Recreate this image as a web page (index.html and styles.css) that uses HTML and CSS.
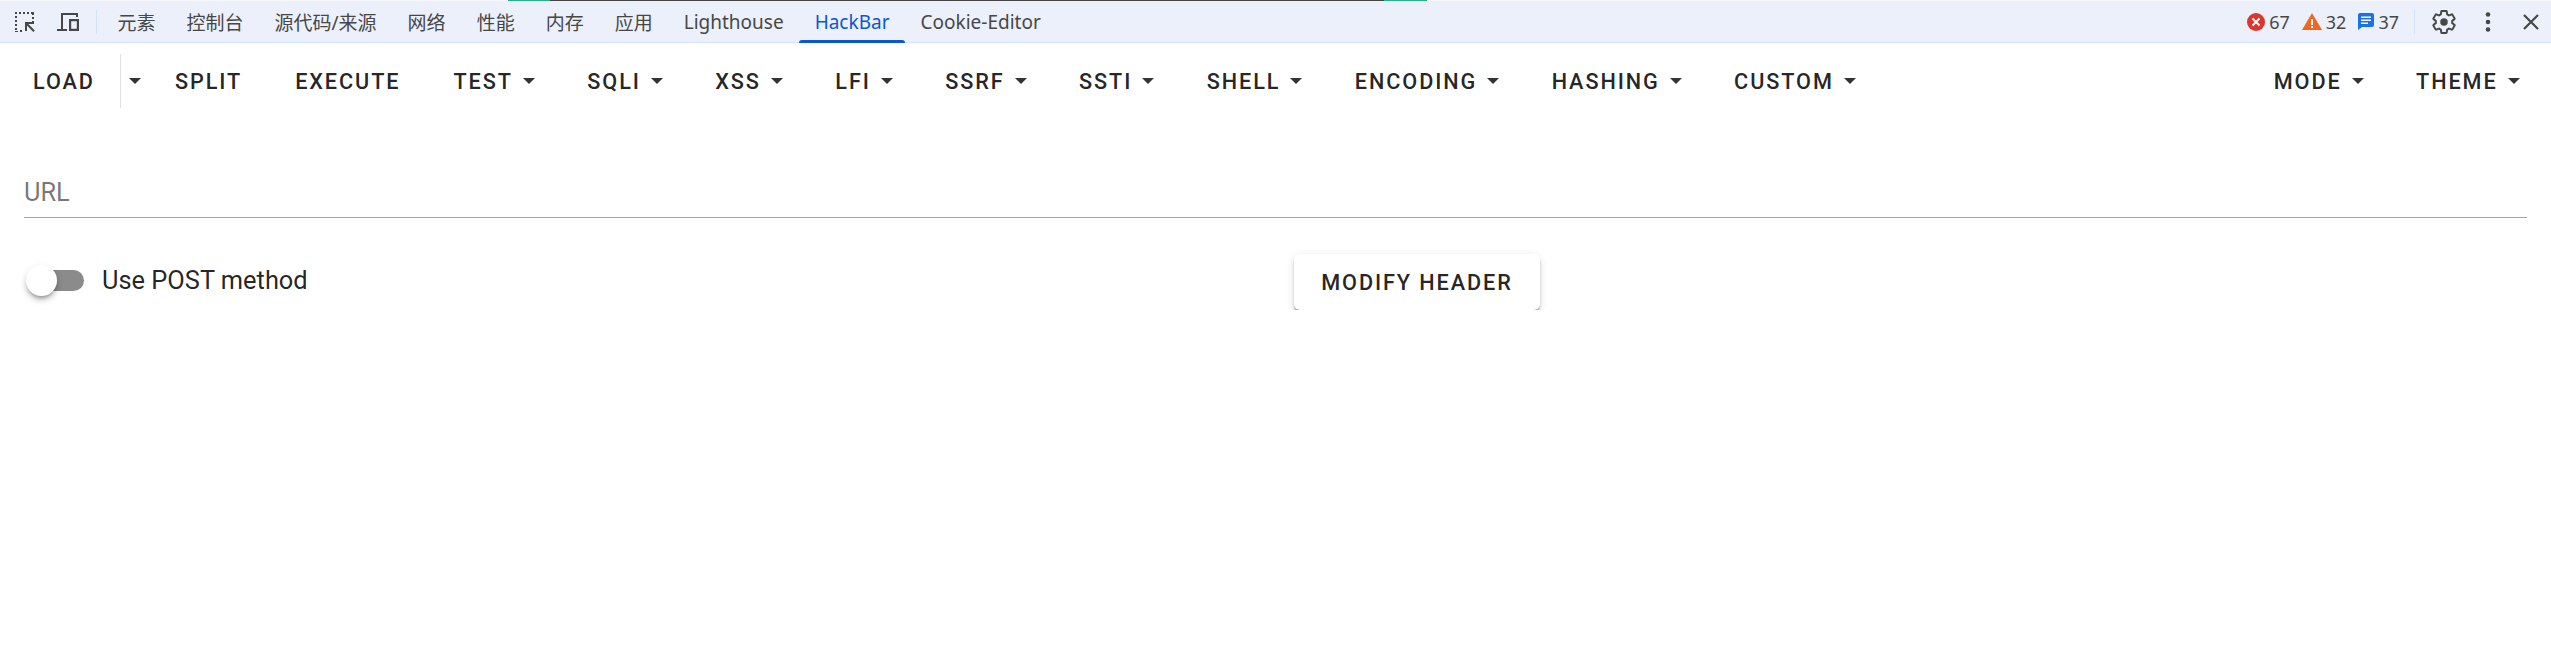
FILE: index.html
```html
<!DOCTYPE html>
<html lang="en">
<head>
    <meta charset="UTF-8">
    <title>HackBar</title>
    <link rel="stylesheet" href="styles.css">
</head>
<body>
    <div class="top-line"><span class="line-teal"></span><span class="line-dark"></span><span class="line-teal line-teal-end"></span></div>

    <!-- DevTools tab strip -->
    <div class="devtools-bar">
        <svg class="tool-icon inspect-icon" viewBox="0 0 24 24" width="24" height="24">
            <path d="M2 2h2v2H2zM6 2h2v2H6zM10 2h2v2h-2zM14 2h2v2h-2zM18 2h3v3h-2V4h-1zM2 6h2v2H2zM2 10h2v2H2zM2 14h2v2H2zM2 18h2v2H2zM2 21h3v1H2zM7 20h2v2H7zM19 7h2v2h-2zM19 11h2v2h-2z" fill="#474747"/>
            <path d="M12 12h9v2h-5.600l6.400 6.400-1.500 1.500-6.300-6.300V21h-2z" fill="#474747"/>
        </svg>
        <svg class="tool-icon device-icon" viewBox="0 0 24 24" width="24" height="24">
            <path d="M1 19v2h10v-2H7V5h13v2h2V3H5v16z" fill="#474747"/>
            <path d="M13 9h10v12H13zm2.200 2.200v7.600h5.600v-7.600z" fill="#474747" fill-rule="evenodd"/>
        </svg>
        <span class="bar-divider"></span>
        <div class="tabs">
            <span class="tab">元素</span>
            <span class="tab">控制台</span>
            <span class="tab">源代码/来源</span>
            <span class="tab">网络</span>
            <span class="tab">性能</span>
            <span class="tab">内存</span>
            <span class="tab">应用</span>
            <span class="tab">Lighthouse</span>
            <span class="tab tab-active">HackBar</span>
            <span class="tab">Cookie-Editor</span>
        </div>
        <div class="status">
            <svg class="status-icon" viewBox="0 0 18 18" width="18" height="18">
                <circle cx="9" cy="9" r="9" fill="#dc362e"/>
                <path d="M5.500 5.500l7 7M12.500 5.500l-7 7" stroke="#fff" stroke-width="2"/>
            </svg>
            <span class="count">67</span>
            <svg class="status-icon warn-icon" viewBox="0 0 20 18" width="20" height="18">
                <path d="M10 0l10 17H0z" fill="#ee6723"/>
                <path d="M9 6h2v6H9zM9 13h2v2H9z" fill="#fff"/>
            </svg>
            <span class="count">32</span>
            <svg class="status-icon info-icon" viewBox="0 0 16 17" width="16" height="17">
                <path d="M2 0h12a2 2 0 0 1 2 2v10a2 2 0 0 1-2 2H4l-4 3V2a2 2 0 0 1 2-2z" fill="#1a73e8"/>
                <path d="M3 3.500h10V5H3zM3 6.500h10V8H3zM3 9.500h7V11H3z" fill="#fff"/>
            </svg>
            <span class="count">37</span>
            <span class="bar-divider status-divider"></span>
            <svg class="tool-icon gear-icon" viewBox="1.500 1.500 21 21" width="24" height="24">
                <path d="M19.140 12.940c.040-.300.060-.610.060-.940s-.020-.640-.070-.940l2.030-1.580a.49.490 0 0 0 .120-.610l-1.920-3.320a.49.490 0 0 0-.590-.220l-2.390.960a7 7 0 0 0-1.620-.940l-.360-2.540a.48.480 0 0 0-.480-.410h-3.840a.47.470 0 0 0-.470.410l-.360 2.540a7.300 7.300 0 0 0-1.620.940l-2.390-.960a.48.480 0 0 0-.590.220L2.740 8.870a.48.480 0 0 0 .120.610l2.030 1.580c-.050.300-.090.630-.090.940s.020.640.070.940l-2.030 1.580a.49.490 0 0 0-.120.610l1.920 3.320c.120.220.370.290.590.220l2.390-.960c.500.380 1.030.700 1.620.940l.360 2.540c.050.240.240.410.480.410h3.840c.240 0 .440-.170.470-.410l.360-2.540a7 7 0 0 0 1.620-.940l2.390.960c.220.080.470 0 .590-.220l1.920-3.320a.48.480 0 0 0-.120-.610z" fill="none" stroke="#474747" stroke-width="1.700"/>
                <circle cx="12" cy="12" r="3.300" fill="#474747"/>
            </svg>
            <svg class="tool-icon dots-icon" viewBox="0 0 24 24" width="24" height="24">
                <circle cx="12" cy="4.500" r="2.300" fill="#474747"/>
                <circle cx="12" cy="12" r="2.300" fill="#474747"/>
                <circle cx="12" cy="19.500" r="2.300" fill="#474747"/>
            </svg>
            <svg class="tool-icon close-icon" viewBox="0 0 24 24" width="24" height="24">
                <path d="M5 5l14 14M19 5L5 19" stroke="#474747" stroke-width="2.200" fill="none"/>
            </svg>
        </div>
    </div>

    <!-- HackBar toolbar -->
    <div class="toolbar">
        <div class="btn-group">
            <button class="btn load-btn">LOAD</button>
            <button class="btn split-caret"><svg class="caret" viewBox="7 10 10 5"><path d="M7 10l5 5 5-5z"/></svg></button>
        </div>
        <button class="btn">SPLIT</button>
        <button class="btn">EXECUTE</button>
        <button class="btn">TEST<svg class="caret" viewBox="7 10 10 5"><path d="M7 10l5 5 5-5z"/></svg></button>
        <button class="btn">SQLI<svg class="caret" viewBox="7 10 10 5"><path d="M7 10l5 5 5-5z"/></svg></button>
        <button class="btn">XSS<svg class="caret" viewBox="7 10 10 5"><path d="M7 10l5 5 5-5z"/></svg></button>
        <button class="btn">LFI<svg class="caret" viewBox="7 10 10 5"><path d="M7 10l5 5 5-5z"/></svg></button>
        <button class="btn">SSRF<svg class="caret" viewBox="7 10 10 5"><path d="M7 10l5 5 5-5z"/></svg></button>
        <button class="btn">SSTI<svg class="caret" viewBox="7 10 10 5"><path d="M7 10l5 5 5-5z"/></svg></button>
        <button class="btn">SHELL<svg class="caret" viewBox="7 10 10 5"><path d="M7 10l5 5 5-5z"/></svg></button>
        <button class="btn">ENCODING<svg class="caret" viewBox="7 10 10 5"><path d="M7 10l5 5 5-5z"/></svg></button>
        <button class="btn">HASHING<svg class="caret" viewBox="7 10 10 5"><path d="M7 10l5 5 5-5z"/></svg></button>
        <button class="btn">CUSTOM<svg class="caret" viewBox="7 10 10 5"><path d="M7 10l5 5 5-5z"/></svg></button>
        <div class="spacer"></div>
        <button class="btn">MODE<svg class="caret" viewBox="7 10 10 5"><path d="M7 10l5 5 5-5z"/></svg></button>
        <button class="btn">THEME<svg class="caret" viewBox="7 10 10 5"><path d="M7 10l5 5 5-5z"/></svg></button>
    </div>

    <!-- URL field -->
    <div class="url-field">
        <div class="url-label">URL</div>
    </div>

    <div class="options">
        <div class="switch-row">
            <div class="switch"><span class="switch-track"></span><span class="switch-thumb"></span></div>
            <label class="switch-label">Use POST method</label>
        </div>
        <div class="header-col">
            <button class="raised-btn">MODIFY HEADER</button>
        </div>
    </div>
</body>
</html>
```

FILE: styles.css
```css
body {
    margin: 0;
    background-color: #fff;
    font-family: Roboto, sans-serif;
    color: rgba(0, 0, 0, 0.87);
}
.top-line {
    display: flex;
    height: 1px;
    padding-left: 508px;
    background-color: #f7f9fd;
}
.line-teal {
    width: 42px;
    background-color: #2fae8f;
}
.line-dark {
    width: 834px;
    background-color: #444;
}
.line-teal-end {
    width: 43px;
}
.devtools-bar {
    display: flex;
    align-items: center;
    height: 41px;
    background-color: #ebf0fa;
    border-bottom: 1px solid #d3e3fd;
    padding-left: 13px;
    font-family: "Noto Sans", "Noto Sans CJK SC", sans-serif;
}
.tool-icon {
    flex: none;
}
.device-icon {
    margin-left: 19px;
}
.bar-divider {
    width: 1px;
    height: 24px;
    background-color: #d3e3fd;
    margin: 0 5px 0 16px;
}
.tabs {
    display: flex;
    height: 100%;
}
.tab {
    position: relative;
    display: flex;
    align-items: center;
    padding: 0 15.5px;
    font-size: 19px;
    color: #474747;
}
.tab-active {
    color: #0b57d0;
}
.tab-active::after {
    content: "";
    position: absolute;
    left: 0;
    right: 0;
    bottom: -1px;
    height: 3px;
    border-radius: 3px 3px 0 0;
    background-color: #0b57d0;
}
.status {
    display: flex;
    align-items: center;
    margin-left: auto;
}
.status-icon {
    flex: none;
    margin-right: 4px;
}
.count {
    font-size: 18px;
    color: #474747;
    margin-right: 12px;
}
.status-divider {
    margin: 0 17px 0 3px;
}
.dots-icon {
    margin-left: 20px;
}
.close-icon {
    margin: 0 8px 0 19px;
}
.toolbar {
    display: flex;
    align-items: center;
    gap: 3px;
    padding: 11px 7px 0 8px;
}
.btn-group {
    display: flex;
}
.btn {
    display: flex;
    align-items: center;
    height: 54px;
    padding: 0 25px;
    border: none;
    background: none;
    font-family: Roboto, sans-serif;
    font-size: 21.7px;
    font-weight: 500;
    letter-spacing: 1.9px;
    color: rgba(0, 0, 0, 0.87);
}
.load-btn {
    border-right: 1px solid rgba(0, 0, 0, 0.12);
}
.split-caret {
    padding: 0 6px 0 8px;
}
.caret {
    width: 12px;
    height: 6px;
    margin-left: 10px;
    margin-right: -0.6px;
    fill: #333;
}
.split-caret .caret {
    margin: 0;
}
.spacer {
    flex: 1;
}
.url-field {
    margin: 39px 24px 0;
    height: 70px;
    border-bottom: 1px solid #a6a6a6;
}
.url-label {
    padding-top: 30px;
    font-size: 25.4px;
    color: rgba(0, 0, 0, 0.54);
}
.options {
    display: grid;
    grid-template-columns: 283px 1fr;
    margin: 36px 24px 0;
}
.switch-row {
    display: flex;
    align-items: center;
    height: 56px;
    white-space: nowrap;
}
.switch {
    flex: none;
    position: relative;
    width: 60px;
    height: 31px;
    margin-right: 18px;
    margin-bottom: 3px;
}
.switch-track {
    display: block;
    position: absolute;
    left: 4px;
    top: 5px;
    width: 56px;
    height: 21px;
    border-radius: 11px;
    background-color: #8b8b8b;
}
.switch-thumb {
    position: absolute;
    left: 2px;
    top: 0;
    width: 31px;
    height: 31px;
    border-radius: 50%;
    background-color: #fff;
    box-shadow: 0 4px 3px -2px rgba(0, 0, 0, 0.22), 0 4px 5px rgba(0, 0, 0, 0.14), 0 3px 9px rgba(0, 0, 0, 0.12);
}
.switch-label {
    font-size: 25.4px;
    margin-bottom: 4px;
}
.header-col {
    display: flex;
    justify-content: center;
}
.raised-btn {
    height: 56px;
    padding: 0 27px;
    border: none;
    border-radius: 6px;
    background-color: #fff;
    font-family: Roboto, sans-serif;
    font-size: 21.7px;
    font-weight: 500;
    letter-spacing: 1.9px;
    color: rgba(0, 0, 0, 0.87);
    box-shadow: 0 3px 2px -1px rgba(0, 0, 0, 0.3), 0 3px 3px rgba(0, 0, 0, 0.14), 0 2px 8px rgba(0, 0, 0, 0.12);
}
```
